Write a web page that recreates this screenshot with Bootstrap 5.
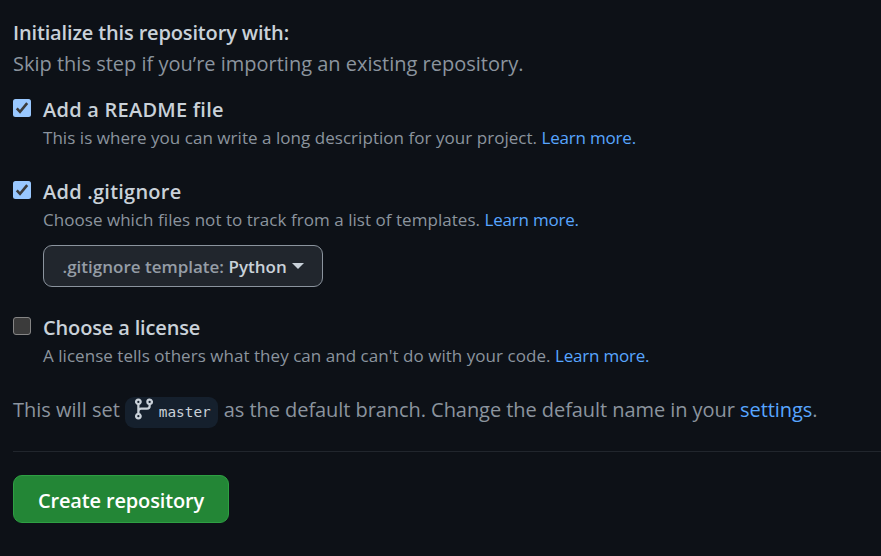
<!DOCTYPE html>
<html lang="en" data-bs-theme="dark">
<head>
<meta charset="utf-8">
<meta name="viewport" content="width=device-width, initial-scale=1">
<title>Create a new repository</title>
<link href="https://cdn.jsdelivr.net/npm/bootstrap@5.3.0/dist/css/bootstrap.min.css" rel="stylesheet">
<script src="https://cdn.jsdelivr.net/npm/bootstrap@5.3.0/dist/js/bootstrap.bundle.min.js" defer></script>
<style>
body{background:#0d1117;color:#8b949e;font-family:"Open Sans","Noto Sans",sans-serif;font-size:20px;line-height:31px}
a,a:hover{color:#58a6ff}
.page{padding:17px 0 0 13px}
.title{color:#c9d1d9;font-weight:600;font-size:20px;line-height:31px}
.wide{letter-spacing:.24px}
.tight{letter-spacing:-.15px}
.note{font-size:17px;line-height:27px;margin-top:-1px;margin-bottom:1px;letter-spacing:.04px}
.note a{letter-spacing:-.2px}
.intro{margin-bottom:15px}
.tick{width:18px;height:18px;margin-top:5px}
.option{gap:12px;margin-bottom:24px}
.picker{background:#21262d;border:1px solid #8b949e;border-radius:9px;color:#c9d1d9;width:280px;height:42px;font-size:17px;line-height:27px;font-weight:600;margin:12px 0 1px;padding:0 0 0 18.5px}
.picker-name{color:#959da6}
.picker-caret{border:6px solid transparent;border-top-color:currentColor;border-bottom:0;margin-left:5px}
.branch{background:#15202d;color:#c9d1d9;border-radius:9px;width:93px;height:31px;margin:3px 6px 0 5px;padding-left:7px}
.branch-name{font-family:"DejaVu Sans Mono",monospace;font-size:14.4px;line-height:20px;padding-top:5px;margin-left:3px}
.branch-row{margin-bottom:23px}
.branch-rest{letter-spacing:-.06px}
.rule{height:1px;background:#21262d}
.create{background:#238636;border:1px solid #2ea043;border-radius:9px;color:#fff;width:216px;height:48px;font-size:20px;font-weight:600;line-height:30px;letter-spacing:-.15px;padding:4px 0 0;margin-top:23px}
</style>
</head>
<body class="overflow-hidden">
<main class="page text-nowrap">
  <div class="title tight">Initialize this repository with:</div>
  <div class="intro">Skip this step if you’re importing an existing repository.</div>

  <div class="option d-flex">
    <svg class="tick flex-shrink-0" viewBox="0 0 18 18" role="img" aria-label="Checked"><rect width="18" height="18" rx="2.5" fill="#99c8ff"/><path d="M3.8 9.4 7 12.8 14.2 4.2" fill="none" stroke="#3b3b3b" stroke-width="2.6"/></svg>
    <div>
      <div class="title wide">Add a README file</div>
      <div class="note">This is where you can write a long description for your project. <a class="text-decoration-none" href="#">Learn more.</a></div>
    </div>
  </div>

  <div class="option d-flex">
    <svg class="tick flex-shrink-0" viewBox="0 0 18 18" role="img" aria-label="Checked"><rect width="18" height="18" rx="2.5" fill="#99c8ff"/><path d="M3.8 9.4 7 12.8 14.2 4.2" fill="none" stroke="#3b3b3b" stroke-width="2.6"/></svg>
    <div>
      <div class="title wide">Add .gitignore</div>
      <div class="note mb-0">Choose which files not to track from a list of templates. <a class="text-decoration-none" href="#">Learn more.</a></div>
      <button class="picker btn d-flex align-items-center" type="button"><span class="picker-name">.gitignore template:</span>&nbsp;<span>Python</span><span class="picker-caret"></span></button>
    </div>
  </div>

  <div class="option d-flex">
    <svg class="tick flex-shrink-0" viewBox="0 0 18 18" role="img" aria-label="Not checked"><rect x=".5" y=".5" width="17" height="17" rx="2.5" fill="#3b3b3b" stroke="#858585"/></svg>
    <div>
      <div class="title tight">Choose a license</div>
      <div class="note">A license tells others what they can and can't do with your code. <a class="text-decoration-none" href="#">Learn more.</a></div>
    </div>
  </div>

  <div class="branch-row d-flex">
    <span>This will set</span>
    <span class="branch d-inline-flex align-items-start">
      <svg class="flex-shrink-0" width="24" height="24" viewBox="0 0 16 16" fill="#c9d1d9" aria-hidden="true"><path fill-rule="evenodd" d="M11.75 2.5a.75.75 0 100 1.5.75.75 0 000-1.5zm-2.25.75a2.25 2.25 0 113 2.122V6A2.5 2.5 0 0110 8.5H6a1 1 0 00-1 1v1.128a2.251 2.251 0 11-1.5 0V5.372a2.25 2.25 0 111.5 0v1.836A2.492 2.492 0 016 7h4a1 1 0 001-1v-.628A2.25 2.25 0 019.5 3.25zM4.25 12a.75.75 0 100 1.5.75.75 0 000-1.5zM3.5 3.25a.75.75 0 111.5 0 .75.75 0 01-1.5 0z"/></svg>
      <span class="branch-name">master</span>
    </span>
    <span class="branch-rest">as the default branch. Change the default name in your <a class="text-decoration-none" href="#">settings</a>.</span>
  </div>

  <div class="rule"></div>
  <button class="create btn" type="button">Create repository</button>
</main>
</body>
</html>
